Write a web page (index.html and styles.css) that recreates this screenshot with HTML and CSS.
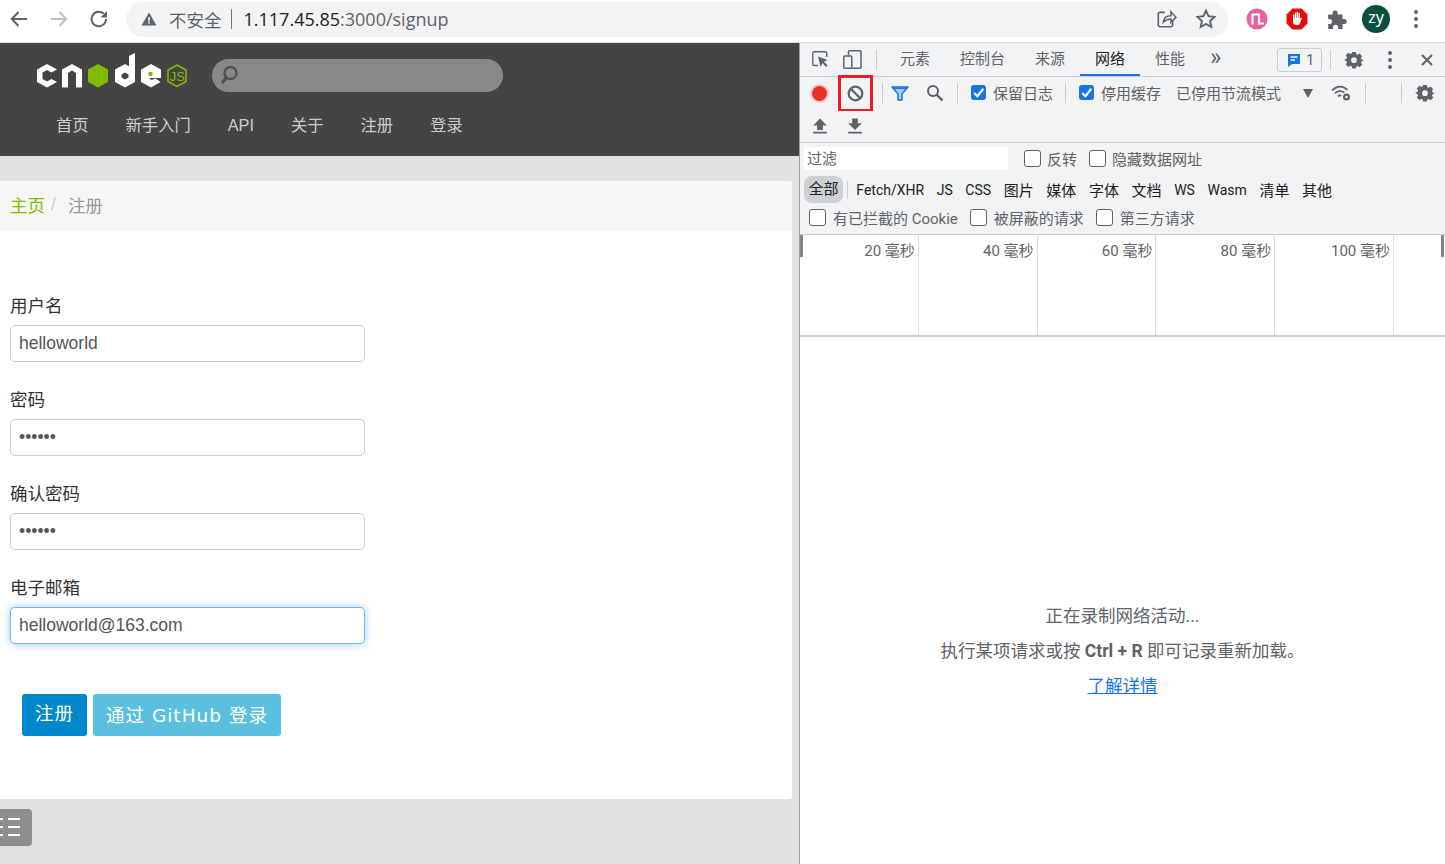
FILE: index.html
```html
<!DOCTYPE html>
<html lang="zh-CN">
<head>
  <meta charset="UTF-8">
  <title>注册</title>
  <link rel="stylesheet" href="styles.css">
</head>
<body>
  <!-- browser toolbar -->
  <div class="chrome">
    <svg class="nav-icon" viewBox="0 0 24 24"><path d="M20 12H5M11.500 5 4.800 12l6.700 7" fill="none" stroke="#5f6368" stroke-width="2"/></svg>
    <svg class="nav-icon" viewBox="0 0 24 24"><path d="M4 12h15M12.500 5l6.700 7-6.700 7" fill="none" stroke="#bdc1c6" stroke-width="2"/></svg>
    <svg class="nav-icon" viewBox="0 0 24 24"><path d="M19 12a7.200 7.200 0 1 1-2.200-5.200" fill="none" stroke="#5f6368" stroke-width="2"/><path d="M20 4v6.500h-6.500z" fill="#5f6368"/></svg>
    <div class="omnibox">
      <svg class="warn" viewBox="0 0 16 16"><path d="M8 1.500 15.500 14.500H.5z" fill="#5f6368"/><path d="M7.200 6h1.600v4.500H7.200zM7.200 11.300h1.600v1.500H7.200z" fill="#f1f3f4"/></svg>
      <span class="insecure">不安全</span>
      <span class="url-sep"></span>
      <span class="url"><b>1.117.45.85</b>:3000/signup</span>
      <span class="spacer"></span>
      <svg class="omni-icon" viewBox="0 0 20 20"><path d="M9 4H4.500A1.500 1.500 0 0 0 3 5.500v10A1.500 1.500 0 0 0 4.500 17h10a1.500 1.500 0 0 0 1.500-1.500V12" fill="none" stroke="#5f6368" stroke-width="1.500"/><path d="M7.500 13c.5-4 3-6 7-6V3.500L19 8.500l-4.500 4.500V10c-3 0-5 1-7 3z" fill="none" stroke="#5f6368" stroke-width="1.400"/></svg>
      <svg class="omni-icon star" viewBox="0 0 20 20"><path d="m10 2.500 2.300 5 5.400.6-4 3.700 1.100 5.400-4.800-2.700-4.800 2.700 1.100-5.400-4-3.700 5.400-.6z" fill="none" stroke="#5f6368" stroke-width="1.700"/></svg>
    </div>
    <div class="ext-icons">
      <svg class="ext" viewBox="0 0 22 22"><circle cx="11" cy="11" r="10.500" fill="#e8619c"/><path d="M6.500 16.500V6.500H13V15.500H18" fill="none" stroke="#fff" stroke-width="2.200"/></svg>
      <svg class="ext" viewBox="0 0 22 22"><path d="M6.500 .5h9l6 6v9l-6 6h-9l-6-6v-9z" fill="#e60c0c"/><path d="M7 11V6.500h1.300V10h.5V4.500h1.400V10h.5V4h1.400v6h.5V5h1.400v6l1-1.500 1 .6-2.200 5.400c-.5 1-1.300 1.500-2.500 1.500H10c-2 0-3-1.500-3-3z" fill="#fff"/></svg>
      <svg class="ext puzzle" viewBox="0 0 20 20"><path d="M2 6h4V4.500a2.300 2.300 0 0 1 4.600 0V6h4.400v4h1.500a2.300 2.300 0 0 1 0 4.600H15V19h-4v-1.500a2.300 2.300 0 0 0-4.600 0V19H2v-4.500h1.200a2.300 2.300 0 0 0 0-4.600H2z" fill="#5f6368"/></svg>
      <span class="avatar">zy</span>
      <span class="kebab"><i></i><i></i><i></i></span>
    </div>
  </div>

  <div class="workspace">
    <!-- the signup page -->
    <div class="page">
      <div class="site-header">
        <div class="header-top">
          <svg class="logo" viewBox="0 0 154 40">
            <g fill="#fff">
              <path d="M11 14 21 19.500 15.500 22.500 11 20 6.500 22.500V29L11 31.500 15.500 29 21 32 11 37.500 1 32V19.500z"/>
              <path d="M36 14 46 19.500V37.500H40V23L36 20.500 32 23V37.500H26V19.500z"/>
              <path fill-rule="evenodd" d="M99 3V32L89 37.500 79 32V19.500L89 14 93 16.200V6zM89 22.500 85.500 24.500V27.500L89 29.500 92.500 27.500V24.500z"/>
              <path d="M115 14 125 19.500V28H113L115.500 30 119.500 28.500 124.500 32 115 37.500 105 32V19.500z"/>
            </g>
            <path d="M62 14 72 19.500V32L62 37.500 52 32V19.500z" fill="#80bd01"/>
            <circle cx="114.500" cy="24" r="2.300" fill="#80bd01"/>
            <path d="M141 15 150 20V31.500L141 36.500 132 31.500V20z" fill="none" stroke="#80bd01" stroke-width="1.500"/>
            <text x="133.800" y="30.500" class="logo-js">JS</text>
          </svg>
          <div class="search">
            <svg viewBox="0 0 18 20"><circle cx="10.500" cy="8" r="6" fill="none" stroke="#444" stroke-width="2.400" opacity=".8"/><path d="M6.500 12.500 2 18" stroke="#444" stroke-width="3" opacity=".8"/></svg>
          </div>
        </div>
        <nav class="site-nav">
          <a>首页</a><a>新手入门</a><a>API</a><a>关于</a><a>注册</a><a>登录</a>
        </nav>
      </div>

      <div class="content">
        <div class="panel">
          <div class="breadcrumb"><a>主页</a><span class="divider">/</span><span class="active">注册</span></div>
          <form class="signup">
            <div class="field"><label>用户名</label><div class="input">helloworld</div></div>
            <div class="field"><label>密码</label><div class="input dots">••••••</div></div>
            <div class="field"><label>确认密码</label><div class="input dots">••••••</div></div>
            <div class="field"><label>电子邮箱</label><div class="input focus">helloworld@163.com</div></div>
            <div class="actions">
              <button type="button" class="btn btn-primary">注册</button>
              <button type="button" class="btn btn-info">通过 GitHub 登录</button>
            </div>
          </form>
        </div>
        <div class="side-toggle">
          <svg viewBox="0 0 32 20"><path d="M8 1h12M8 9h12M8 17h12" stroke="#fff" stroke-width="2"/><path d="M0 1h3M0 9h3M0 17h3" stroke="#fff" stroke-width="2"/></svg>
        </div>
      </div>
    </div>

    <!-- devtools -->
    <div class="devtools">
      <div class="dt-tabs">
        <svg class="inspect" viewBox="0 0 16 17"><path d="M6 14.500H2A1.200 1.200 0 0 1 .8 13.300V2A1.200 1.200 0 0 1 2 .8h11.500A1.200 1.200 0 0 1 14.700 2V6" fill="none" stroke="#5f6368" stroke-width="1.400"/><path d="m6 5.500 9.500 3.500-3.500 1.500 3.500 4-1.500 1.500-3.500-4L8.500 16z" fill="#5f6368"/></svg>
        <svg class="device" viewBox="0 0 19 19"><path d="M5.500 5V1.800A1 1 0 0 1 6.500 .8H17a1 1 0 0 1 1 1v15.400a1 1 0 0 1-1 1H9" fill="none" stroke="#5f6368" stroke-width="1.500"/><rect x=".8" y="6" width="8" height="12.200" rx="1" fill="none" stroke="#5f6368" stroke-width="1.500"/></svg>
        <span class="dt-sep sep-tabs"></span>
        <a class="tab">元素</a><a class="tab">控制台</a><a class="tab">来源</a><a class="tab active">网络</a><a class="tab">性能</a>
        <span class="more">»</span>
        <span class="spacer"></span>
        <span class="issues"><svg viewBox="0 0 14 14"><path d="M1 1h12v10H5l-4 3z" fill="#1a73e8"/><path d="M3.500 4h7M3.500 7h4.500" stroke="#fff" stroke-width="1.300"/></svg>1</span>
        <span class="dt-sep"></span>
        <svg class="gear" viewBox="0 0 20 20"><use href="#gear-shape"/></svg>
        <span class="kebab dt-kebab"><i></i><i></i><i></i></span>
        <svg class="close" viewBox="0 0 14 14"><path d="M2 2 12 12M12 2 2 12" stroke="#5f6368" stroke-width="2"/></svg>
      </div>

      <div class="dt-toolbar">
        <span class="record"></span>
        <span class="clear">
          <svg viewBox="0 0 18 18"><circle cx="9" cy="9" r="7.200" fill="none" stroke="#5f6368" stroke-width="2.400"/><path d="m4 4 10 10" stroke="#5f6368" stroke-width="2.400"/></svg>
        </span>
        <span class="dt-sep"></span>
        <svg class="filter-icon" viewBox="0 0 18 15"><path d="M1 1h16l-6 7v6H7V8z" fill="#a9ccf5" stroke="#1a73e8" stroke-width="1.500" stroke-linejoin="round"/><path d="M2 1.500h14l-1 1.500H3z" fill="#1a73e8"/></svg>
        <svg class="find-icon" viewBox="0 0 18 18"><circle cx="7" cy="7" r="5" fill="none" stroke="#5f6368" stroke-width="2"/><path d="m10.500 10.500 6 6" stroke="#5f6368" stroke-width="2.400"/></svg>
        <span class="dt-sep"></span>
        <span class="check on">保留日志</span>
        <span class="dt-sep"></span>
        <span class="check on">停用缓存</span>
        <span class="throttle">已停用节流模式</span>
        <span class="caret"></span>
        <svg class="wifi" viewBox="0 0 20 16"><path d="M1 5.500c5-5 11-5 15.500-.5M3.800 8.500c3-3 7-3 9.500-.8M6.800 11.300c1.500-1.300 2.500-1.300 3.500-.5" fill="none" stroke="#5f6368" stroke-width="1.700"/><circle cx="15.500" cy="12" r="2.400" fill="none" stroke="#5f6368" stroke-width="2.200"/></svg>
        <span class="dt-sep sep-a"></span>
        <span class="dt-sep sep-b"></span>
        <svg class="gear" viewBox="0 0 20 20">
          <path id="gear-shape" fill="#5f6368" fill-rule="evenodd" d="M8 1h4l.5 2.500 1.500.7 2.200-1.300 2.800 2.800-1.300 2.200.7 1.600L21 10v0l-2.500 1.500-.7 1.500 1.300 2.200-2.800 2.800-2.200-1.300-1.600.7L12 19.500H8l-.5-2.400-1.600-.7-2.200 1.300-2.800-2.800 1.300-2.200-.7-1.500L-1 10l2.500-1.500.7-1.500-1.300-2.300 2.800-2.800 2.200 1.300 1.600-.7zM10 7a3.200 3.200 0 1 0 0 6.400A3.200 3.200 0 0 0 10 7z"/>
        </svg>
      </div>

      <div class="dt-toolbar-2">
        <svg viewBox="0 0 14 14"><path d="M7 .5 13 6.500H9.500v4h-5v-4H1zM1 12h12v1.500H1z" fill="#5f6368"/></svg>
        <svg viewBox="0 0 14 14"><path d="M7 10.500 1 4.500h3.500V.5h5v4H13zM1 12h12v1.500H1z" fill="#5f6368"/></svg>
      </div>

      <div class="dt-filters">
        <div class="filter-row">
          <span class="filter-input">过滤</span>
          <span class="check">反转</span>
          <span class="check">隐藏数据网址</span>
        </div>
        <div class="type-row">
          <span class="type selected">全部</span>
          <span class="type-sep"></span>
          <span class="type latin">Fetch/XHR</span><span class="type latin">JS</span><span class="type latin">CSS</span><span class="type">图片</span><span class="type">媒体</span><span class="type">字体</span><span class="type">文档</span><span class="type latin">WS</span><span class="type latin">Wasm</span><span class="type">清单</span><span class="type">其他</span>
        </div>
        <div class="cookie-row">
          <span class="check">有已拦截的 Cookie</span>
          <span class="check">被屏蔽的请求</span>
          <span class="check">第三方请求</span>
        </div>
      </div>

      <div class="timeline">
        <span>20 毫秒</span><span>40 毫秒</span><span>60 毫秒</span><span>80 毫秒</span><span>100 毫秒</span><span class="tail"></span>
      </div>

      <div class="empty">
        <p>正在录制网络活动...</p>
        <p>执行某项请求或按 <b>Ctrl + R</b> 即可记录重新加载。</p>
        <p><a>了解详情</a></p>
      </div>
    </div>
  </div>
</body>
</html>
```

FILE: styles.css
```css
* { box-sizing: border-box; }

html, body {
  margin: 0;
  height: 100%;
  overflow: hidden;
}

body {
  display: flex;
  flex-direction: column;
  background: #fff;
  font-family: "Liberation Sans", "Noto Sans CJK SC", sans-serif;
  color: #333;
}

.spacer { flex: 1; }

/* browser toolbar */
.chrome {
  height: 43px;
  flex: none;
  display: flex;
  align-items: center;
  padding: 0 0 4px 7px;
  background: #fff;
  border-bottom: 1px solid #dadce0;
}

.nav-icon {
  width: 24px;
  height: 24px;
  margin-right: 16px;
}

.omnibox {
  width: 1102px;
  height: 35px;
  margin-left: -1px;
  display: flex;
  align-items: center;
  padding: 0 11px 0 15px;
  border-radius: 18px;
  background: #f1f3f4;
  font-family: "Open Sans", "Noto Sans CJK SC", sans-serif;
  font-size: 18px;
  color: #5f6368;
}

.warn { width: 16px; height: 16px; margin-right: 12px; }
.insecure { font-size: 17.500px; }
.url-sep { width: 1px; height: 20px; margin: 0 12px 0 9px; background: #70757a; }
.url b { font-weight: 400; color: #202124; }

.omni-icon { width: 22px; height: 22px; }
.star { margin-left: 18px; }

.ext-icons {
  display: flex;
  align-items: center;
  margin-left: 18px;
}

.ext { width: 22px; height: 22px; margin-right: 18px; }
.puzzle { margin-right: 14px; }

.avatar {
  width: 28px;
  height: 28px;
  border-radius: 50%;
  background: #0b4f41;
  color: #fff;
  font-family: "Noto Sans", sans-serif;
  font-size: 16px;
  line-height: 25px;
  text-align: center;
}

.kebab {
  display: flex;
  flex-direction: column;
  gap: 3px;
  margin-left: 24px;
}

.kebab i {
  width: 4px;
  height: 4px;
  border-radius: 50%;
  background: #5f6368;
}

.workspace {
  flex: 1;
  min-height: 0;
  display: flex;
}

/* signup page */
.page {
  width: 799px;
  flex: none;
  display: flex;
  flex-direction: column;
  background: #e1e1e1;
}

.site-header {
  height: 113px;
  flex: none;
  background: #444;
}

.header-top {
  display: flex;
  align-items: center;
  height: 65px;
  padding-left: 36px;
}

.logo {
  width: 154px;
  height: 40px;
  margin-top: -11px;
  overflow: visible;
}

.logo-js {
  font-family: "Liberation Sans", sans-serif;
  font-size: 13px;
  fill: #80bd01;
}

.search {
  width: 291px;
  height: 33px;
  margin-left: 22px;
  padding: 6px 0 0 8px;
  border-radius: 17px;
  background: #888;
}

.search svg { display: block; width: 18px; height: 20px; }

.site-nav {
  display: flex;
  gap: 37px;
  margin-top: 5px;
  padding-left: 56px;
  font-size: 16.300px;
  line-height: 24px;
  color: #ccc;
}

.content {
  flex: 1;
  padding: 25px 7px 0 0;
}

.panel {
  height: 618px;
  background: #fff;
  border-radius: 0 3px 3px 0;
  overflow: hidden;
}

.breadcrumb {
  height: 50px;
  display: flex;
  align-items: center;
  padding: 0 0 4px 10px;
  background: #f6f6f6;
  font-size: 17.500px;
  color: #999;
}

.breadcrumb a { color: #80bd01; }
.breadcrumb .divider { margin: 0 12px 0 6px; color: #ccc; }

.signup { padding: 61px 10px 0; }

.field { margin-bottom: 24px; }

.field label {
  display: block;
  height: 28px;
  font-size: 17.500px;
  line-height: 28px;
  color: #333;
}

.input {
  width: 355px;
  height: 37px;
  margin-top: 5px;
  padding: 0 8px;
  border: 1px solid #ccc;
  border-radius: 5px;
  background: #fff;
  font-size: 17.500px;
  line-height: 34px;
  color: #555;
}

.input.dots { line-height: 35px; }

.input.focus {
  line-height: 35px;
  border-color: rgba(82, 168, 236, .8);
  box-shadow: 0 0 8px rgba(82, 168, 236, .6);
}

.actions {
  display: flex;
  gap: 6px;
  padding: 26px 0 0 12px;
}

.btn {
  height: 42px;
  padding: 0 13px 6px;
  border: 0;
  border-radius: 3px;
  color: #fff;
  font-family: "DejaVu Sans", "Noto Sans CJK SC", sans-serif;
  font-size: 18.500px;
  letter-spacing: 1px;
}

.btn-primary { background: #0088cc; }
.btn-info { background: #5bc0de; padding-bottom: 2px; }

.side-toggle {
  width: 32px;
  height: 37px;
  margin-top: 10px;
  padding-top: 9px;
  border-radius: 0 4px 4px 0;
  background: #8e8e8e;
  overflow: hidden;
}

.side-toggle svg { display: block; width: 32px; height: 20px; }

/* devtools */
.devtools {
  flex: 1;
  min-width: 0;
  display: flex;
  flex-direction: column;
  background: #fff;
  border-left: 1px solid #9aa0a6;
  font-family: Roboto, "Noto Sans CJK SC", sans-serif;
  font-size: 15px;
  color: #5f6368;
}

.dt-tabs {
  height: 34px;
  flex: none;
  display: flex;
  align-items: center;
  padding: 0 11px 0 12px;
  background: #f1f3f4;
  border-bottom: 1px solid #cacdd1;
}

.inspect { width: 16px; height: 17px; flex: none; }
.device { width: 19px; height: 19px; flex: none; margin-left: 15px; }

.dt-sep {
  width: 1px;
  height: 20px;
  flex: none;
  background: #cacdd1;
}

.dt-tabs .dt-sep { margin: 0 8px; }
.dt-tabs .sep-tabs { margin: 0 8px 0 14px; }

.tab {
  height: 33px;
  padding: 0 15px;
  line-height: 33px;
  white-space: nowrap;
}

.tab.active {
  color: #202124;
  border-bottom: 2px solid #1a73e8;
}

.more { margin: -6px 0 0 10px; font-size: 24px; line-height: 24px; }

.issues {
  width: 45px;
  height: 24px;
  display: flex;
  align-items: center;
  gap: 5px;
  padding-left: 9px;
  border: 1px solid #cacdd1;
  border-radius: 3px;
}

.issues svg { width: 14px; height: 14px; }

.gear { width: 18px; height: 18px; flex: none; overflow: visible; }
.dt-tabs .gear { margin-left: 6px; }
.dt-kebab { margin-left: 25px; }
.close { width: 14px; height: 14px; margin-left: 28px; }

.dt-toolbar {
  height: 34px;
  flex: none;
  display: flex;
  align-items: center;
  padding: 0 0 2px 12px;
  background: #f1f3f4;
  white-space: nowrap;
}

.record {
  width: 15px;
  height: 15px;
  border-radius: 50%;
  background: #e5322a;
  box-shadow: 0 0 0 2px #f5c9c6;
}

.clear {
  width: 35px;
  height: 37px;
  flex: none;
  margin: 0 9px 0 11px;
  padding: 7px 0 0 6px;
  border: 3px solid #ed1c24;
}

.clear svg { display: block; width: 17px; height: 17px; }

.filter-icon { width: 18px; height: 15px; margin-left: 8px; }
.find-icon { width: 18px; height: 18px; margin: 0 13px 0 17px; }

.check {
  display: inline-flex;
  align-items: center;
  white-space: nowrap;
}

.check::before {
  content: "";
  width: 15px;
  height: 15px;
  flex: none;
  margin-right: 6px;
  border: 1px solid #5f6368;
  border-radius: 3px;
  background: #fff;
}

.check.on::before {
  border: 0;
  background: #1a73e8 url("data:image/svg+xml,%3Csvg xmlns='http://www.w3.org/2000/svg' viewBox='0 0 14 14'%3E%3Cpath d='M3 7.500 6 10.500 11.500 3.500' fill='none' stroke='%23fff' stroke-width='2'/%3E%3C/svg%3E");
}

.dt-toolbar .check { margin: 0 12px 0 13px; padding-bottom: 2px; }
.dt-toolbar .check::before { margin-right: 7px; }
.dt-toolbar .check + .dt-sep + .check { margin-right: 0; }

.throttle { margin-left: 15px; padding-bottom: 2px; }

.caret {
  width: 0;
  height: 0;
  margin-left: 22px;
  border-left: 5px solid transparent;
  border-right: 5px solid transparent;
  border-top: 9px solid #5f6368;
}

.wifi { width: 20px; height: 16px; margin-left: 18px; }
.sep-a { margin-left: 14px; }
.sep-b { margin-left: 35px; }
.dt-toolbar .gear { margin-left: 14px; }

.dt-toolbar-2 {
  height: 32px;
  flex: none;
  display: flex;
  align-items: center;
  gap: 19px;
  padding: 0 0 2px 12px;
  background: #f1f3f4;
  border-bottom: 1px solid #cacdd1;
}

.dt-toolbar-2 svg { width: 16px; height: 16px; }

.dt-filters {
  height: 92px;
  flex: none;
  padding-left: 4px;
  background: #f1f3f4;
  border-bottom: 1px solid #cacdd1;
}

.filter-row {
  height: 33px;
  display: flex;
  align-items: center;
  padding-bottom: 2px;
  white-space: nowrap;
}

.filter-input {
  width: 204px;
  height: 23px;
  padding-left: 3px;
  background: #fff;
  line-height: 25px;
}

.filter-row .check { margin-left: 16px; }
.filter-row .check + .check { margin-left: 12px; }

.type-row {
  height: 27px;
  display: flex;
  align-items: center;
  color: #202124;
}

.type { padding: 0 6.300px; white-space: nowrap; }
.type.latin { font-size: 14px; }

.type.selected {
  height: 27px;
  padding: 0 4.500px;
  border-radius: 8px;
  background: #cdd0d4;
  line-height: 27px;
}

.type-sep { width: 1px; height: 19px; margin: 0 2px 0 4px; background: #cacdd1; }

.cookie-row {
  height: 29px;
  display: flex;
  align-items: center;
  gap: 12px;
  padding-left: 5px;
  white-space: nowrap;
}

.cookie-row .check::before { margin-right: 7px; }

.timeline {
  position: relative;
  height: 102px;
  flex: none;
  display: flex;
  background: #fff;
  border-bottom: 2px solid #cacdd1;
}

.timeline span {
  width: 118.800px;
  flex: none;
  padding: 4px 3px 0 0;
  border-right: 1px solid #dadce0;
  text-align: right;
  white-space: nowrap;
}

.timeline .tail { flex: 1; width: auto; border-right: 0; }

/* overview resize handles */
.timeline::before,
.timeline::after {
  content: "";
  position: absolute;
  top: 0;
  width: 3px;
  height: 22px;
  background: #80868b;
}

.timeline::before { left: 0; }
.timeline::after { right: 1px; }

.empty {
  flex: 1;
  padding-top: 262px;
  text-align: center;
  font-size: 17.500px;
}

.empty p {
  height: 35px;
  margin: 0;
  line-height: 35px;
  white-space: nowrap;
}

.empty a {
  color: #1a73e8;
  text-decoration: underline;
}
```
